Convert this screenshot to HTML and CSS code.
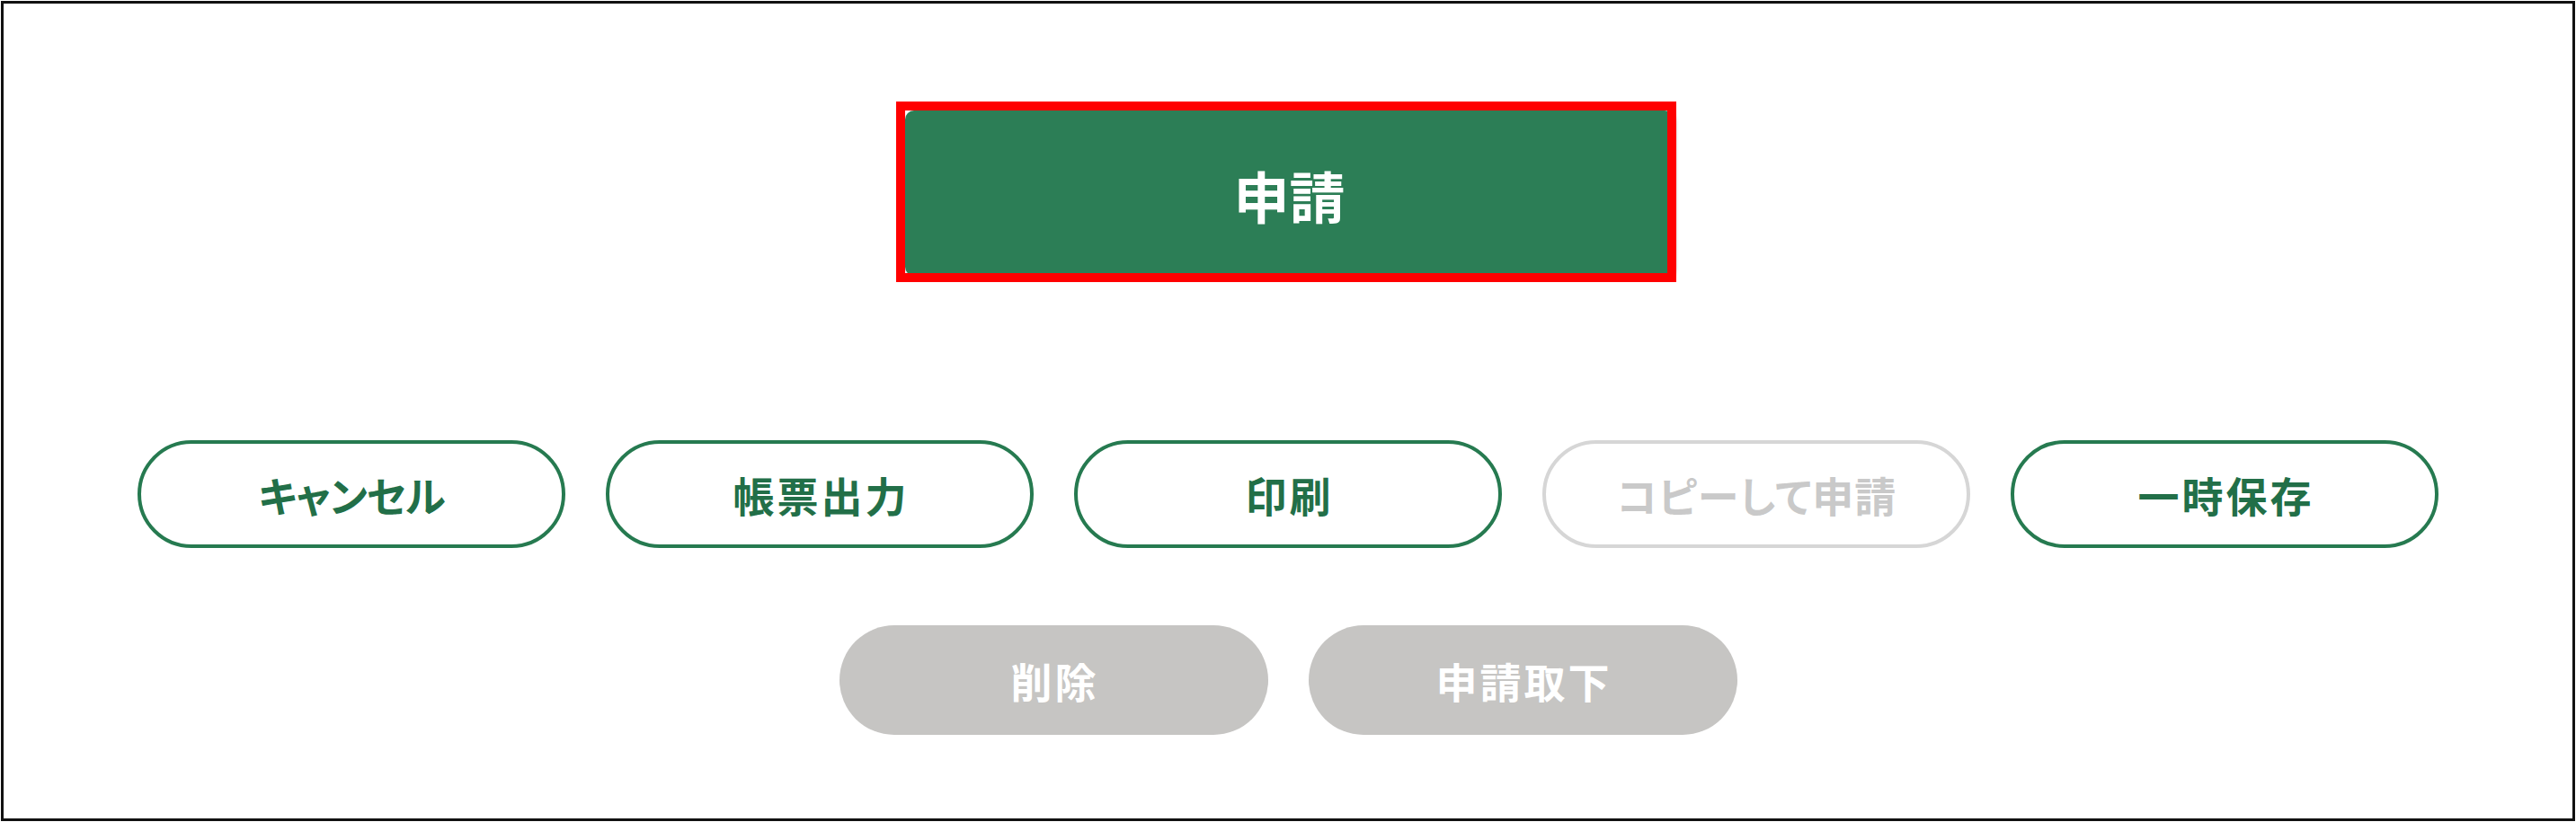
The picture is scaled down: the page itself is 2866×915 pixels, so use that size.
FILE: index.html
```html
<!DOCTYPE html>
<html lang="ja">
<head>
<meta charset="utf-8">
<title>申請</title>
<link rel="stylesheet" href="styles.css">
</head>
<body>
<div class="frame">
  <div class="primary-wrap">
    <button class="primary">申請</button>
  </div>
  <div class="row row-main">
    <button class="pill outline kana">キャンセル</button>
    <button class="pill outline">帳票出力</button>
    <button class="pill outline">印刷</button>
    <button class="pill outline disabled mixed">コピーして申請</button>
    <button class="pill outline">一時保存</button>
  </div>
  <div class="row row-sub">
    <button class="pill filled-gray">削除</button>
    <button class="pill filled-gray">申請取下</button>
  </div>
</div>
</body>
</html>
```
FILE: styles.css
```css
html, body {
  margin: 0;
  padding: 0;
  background: #ffffff;
}
body {
  font-family: "Noto Sans CJK JP", "Noto Sans", sans-serif;
}
.frame {
  margin: 1px 1px 0 1px;
  height: 913px;
  box-sizing: border-box;
  border: 3px solid #111111;
  display: flex;
  flex-direction: column;
  align-items: center;
}
.primary-wrap {
  position: relative;
  width: 868px;
  height: 201px;
  margin-top: 109px;
  margin-right: 4px;
  box-sizing: border-box;
  padding: 10px 0 0 10px;
}
.primary-wrap::after {
  content: "";
  position: absolute;
  inset: 0;
  border: 10px solid #ff0000;
  pointer-events: none;
}
.primary {
  display: flex;
  align-items: center;
  justify-content: center;
  width: 855px;
  height: 184px;
  border: none;
  border-radius: 10px;
  background: #2c7e56;
  color: #ffffff;
  font-family: inherit;
  font-weight: 700;
  font-size: 62px;
  padding: 4px 0 0 0;
  box-shadow: 2px 2px 4px rgba(0, 0, 0, 0.35);
}
.row {
  display: flex;
  gap: 45px;
}
.row-main {
  margin-top: 176px;
}
.row-sub {
  margin-top: 86px;
}
.pill {
  display: flex;
  align-items: center;
  justify-content: center;
  box-sizing: border-box;
  font-family: inherit;
  font-weight: 700;
  font-size: 46px;
  letter-spacing: 3px;
  font-feature-settings: "palt" 1;
  padding: 0 0 0 3px;
  border-radius: 61px;
}
.pill.kana {
  letter-spacing: -1px;
  padding: 0;
}
.pill.mixed {
  letter-spacing: 1px;
  padding: 0 0 0 1px;
}
.outline {
  width: 476px;
  height: 120px;
  border: 4px solid #267a50;
  background: #ffffff;
  color: #226f48;
}
.outline.disabled {
  border-color: #d6d6d6;
  color: #c9c9c9;
}
.filled-gray {
  width: 477px;
  height: 122px;
  border: none;
  background: #c6c5c3;
  color: #ffffff;
}
```
